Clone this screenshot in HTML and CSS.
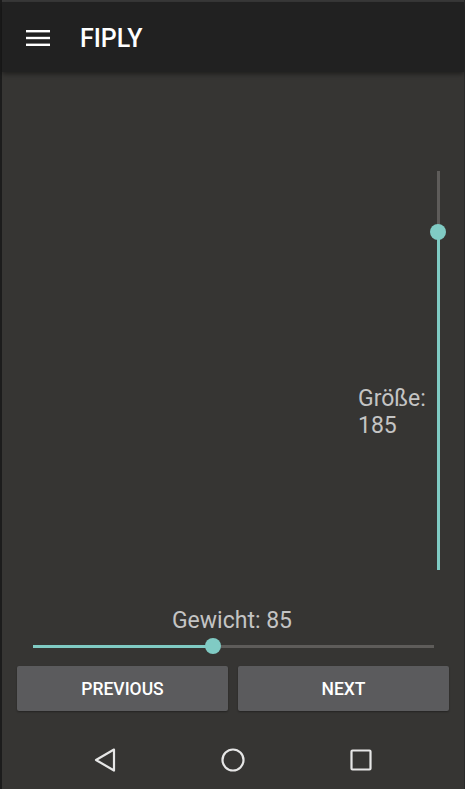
FILE: index.html
```html
<!DOCTYPE html>
<html lang="de">
<head>
<meta charset="utf-8">
<title>FIPLY</title>
<link rel="stylesheet" href="styles.css">
</head>
<body>
<div class="screen">
  <div class="status"></div>
  <header class="appbar">
    <svg class="menu" width="24" height="18" viewBox="0 0 24 18"><rect x="0" y="1" width="24" height="2.4" fill="#fff"/><rect x="0" y="7.8" width="24" height="2.4" fill="#fff"/><rect x="0" y="14.6" width="24" height="2.4" fill="#fff"/></svg>
    <h1 class="title">FIPLY</h1>
  </header>
  <main class="content">
    <div class="stage">
      <div class="vlabel">Größe:<br>185</div>
      <div class="vslider">
        <div class="vtrack-off" style="height:15%"></div>
        <div class="vtrack-on"></div>
        <div class="thumb vthumb" style="top:15%"></div>
      </div>
    </div>
    <div class="hlabel">Gewicht: 85</div>
    <div class="hslider">
      <div class="htrack-on" style="width:45%"></div>
      <div class="htrack-off"></div>
      <div class="thumb hthumb" style="left:45%"></div>
    </div>
    <div class="buttons">
      <button class="btn">PREVIOUS</button>
      <button class="btn">NEXT</button>
    </div>
  </main>
  <nav class="navbar">
    <svg width="24" height="26" viewBox="0 0 24 26"><path d="M21 2.5 L3 13 L21 23.5 Z" fill="none" stroke="#e6e6e6" stroke-width="2.2" stroke-linejoin="round"/></svg>
    <svg width="26" height="26" viewBox="0 0 26 26"><circle cx="13" cy="13" r="10.5" fill="none" stroke="#e6e6e6" stroke-width="2.2"/></svg>
    <svg width="24" height="24" viewBox="0 0 24 24"><rect x="2.5" y="2.5" width="19" height="19" rx="1" fill="none" stroke="#e6e6e6" stroke-width="2.2"/></svg>
  </nav>
</div>
</body>
</html>
```
FILE: styles.css
```css
* { box-sizing: border-box; }
html, body { margin: 0; padding: 0; }
body {
  width: 465px;
  height: 789px;
  overflow: hidden;
  background: #363533;
  font-family: Roboto, "Noto Sans", sans-serif;
}
.screen {
  width: 465px;
  height: 789px;
  display: flex;
  flex-direction: column;
  background: #363533;
  border-left: 2px solid #1c1c1c;
  border-right: 1px solid #2a2a2a;
}
.status {
  height: 2px;
  background: #3a3a3a;
  flex: none;
}
.appbar {
  height: 70px;
  flex: none;
  background: #212121;
  display: flex;
  align-items: center;
  padding-left: 24px;
  position: relative;
  z-index: 2;
  box-shadow: 0 2px 5px rgba(0,0,0,0.45);
}
.menu { display: block; margin-top: 1px; }
.title {
  margin: 0 0 0 30px;
  color: #fff;
  font-size: 25px;
  font-weight: 500;
  line-height: 1;
  padding-top: 2px;
}
.content {
  flex: none;
  display: flex;
  flex-direction: column;
  align-items: stretch;
}
.stage {
  display: flex;
  justify-content: flex-end;
  align-items: flex-start;
  padding-top: 99px;
  padding-right: 18px;
}
.vlabel {
  color: #c4c4c4;
  font-size: 23px;
  line-height: 27px;
  margin-top: 214px;
  width: 72px;
  white-space: nowrap;
}
.vslider {
  position: relative;
  width: 16px;
  height: 399px;
  display: flex;
  flex-direction: column;
  align-items: center;
}
.vtrack-off { width: 3px; background: #5e5c5a; flex: none; }
.vtrack-on { width: 3px; background: #80cbc4; flex: 1; }
.thumb {
  position: absolute;
  width: 16px;
  height: 16px;
  border-radius: 50%;
  background: #80cbc4;
}
.vthumb { left: 0; transform: translateY(-8px); margin-top: 1px; }
.hlabel {
  color: #c4c4c4;
  font-size: 23px;
  line-height: 27px;
  text-align: center;
  margin-top: 37px;
  padding-right: 2px;
}
.hslider {
  position: relative;
  margin: 4px 30px 0 31px;
  height: 16px;
  display: flex;
  align-items: center;
}
.htrack-on { height: 3px; background: #80cbc4; flex: none; }
.htrack-off { height: 3px; background: #5e5c5a; flex: 1; }
.hthumb { top: 0; transform: translateX(-8px); }
.buttons {
  display: flex;
  gap: 10px;
  padding: 0 15px 0 15px;
  margin-top: 12px;
}
.btn {
  flex: 1;
  height: 45px;
  border: none;
  border-radius: 2px;
  background: #5b5b5d;
  color: #fff;
  font-family: Roboto, "Noto Sans", sans-serif;
  font-size: 17.5px;
  font-weight: 500;
  box-shadow: 0 1px 2px rgba(0,0,0,0.35);
  padding: 0;
}
.navbar {
  flex: 1;
  display: flex;
  justify-content: space-between;
  align-items: center;
  padding: 20px 91px 0 91px;
}
.navbar svg { display: block; }
```
